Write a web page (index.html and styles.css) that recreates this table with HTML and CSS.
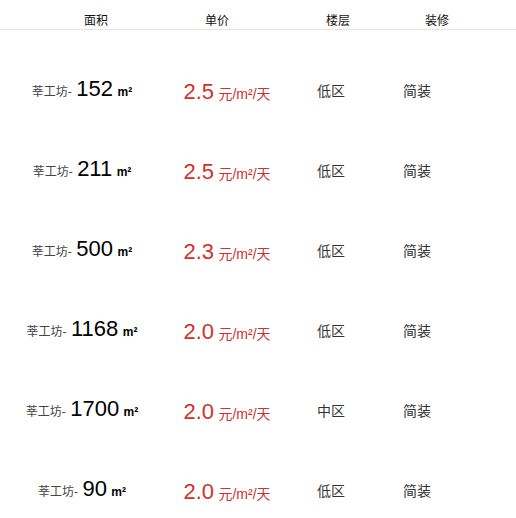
FILE: index.html
```html
<!DOCTYPE html>
<html lang="zh">
<head>
<meta charset="utf-8">
<link rel="stylesheet" href="styles.css">
</head>
<body>
<div class="head">
  <span>面积</span><span>单价</span><span>楼层</span><span>装修</span>
</div>
<div class="list">
  <div class="row">
    <div class="area"><span class="name">莘工坊-</span> <span class="num">152</span> <span class="unit">m²</span></div>
    <div class="price"><span class="pnum">2.5</span> <span class="punit">元/m²/天</span></div>
    <div class="floor">低区</div>
    <div class="deco">简装</div>
  </div>
  <div class="row">
    <div class="area"><span class="name">莘工坊-</span> <span class="num">211</span> <span class="unit">m²</span></div>
    <div class="price"><span class="pnum">2.5</span> <span class="punit">元/m²/天</span></div>
    <div class="floor">低区</div>
    <div class="deco">简装</div>
  </div>
  <div class="row">
    <div class="area"><span class="name">莘工坊-</span> <span class="num">500</span> <span class="unit">m²</span></div>
    <div class="price"><span class="pnum">2.3</span> <span class="punit">元/m²/天</span></div>
    <div class="floor">低区</div>
    <div class="deco">简装</div>
  </div>
  <div class="row">
    <div class="area"><span class="name">莘工坊-</span> <span class="num">1168</span> <span class="unit">m²</span></div>
    <div class="price"><span class="pnum">2.0</span> <span class="punit">元/m²/天</span></div>
    <div class="floor">低区</div>
    <div class="deco">简装</div>
  </div>
  <div class="row">
    <div class="area"><span class="name">莘工坊-</span> <span class="num">1700</span> <span class="unit">m²</span></div>
    <div class="price"><span class="pnum">2.0</span> <span class="punit">元/m²/天</span></div>
    <div class="floor">中区</div>
    <div class="deco">简装</div>
  </div>
  <div class="row">
    <div class="area"><span class="name">莘工坊-</span> <span class="num">90</span> <span class="unit">m²</span></div>
    <div class="price"><span class="pnum">2.0</span> <span class="punit">元/m²/天</span></div>
    <div class="floor">低区</div>
    <div class="deco">简装</div>
  </div>
</div>
</body>
</html>
```
FILE: styles.css
```css
html, body {
  margin: 0;
  padding: 0;
  background: #fff;
}
body {
  font-family: "Liberation Sans", Arial, "Noto Sans CJK SC", sans-serif;
  color: #333;
}
.head {
  display: grid;
  grid-template-columns: 121px 121px 99px auto;
  padding-left: 84px;
  height: 29px;
  border-bottom: 1px solid #e5e5e5;
  font-size: 12px;
  line-height: 12px;
  color: #111;
  align-items: start;
}
.head span {
  padding-top: 15px;
}
.list {
  padding-top: 20px;
}
.row {
  display: grid;
  grid-template-columns: 164px 126px 113px auto;
  height: 80px;
  align-items: center;
}
.area {
  text-align: center;
  white-space: nowrap;
  line-height: 24px;
}
.name {
  font-size: 12px;
  color: #444;
}
.num {
  font-size: 22px;
  color: #000;
}
.unit {
  font-size: 12px;
  color: #000;
  font-weight: 600;
}
.price {
  text-align: center;
  white-space: nowrap;
  color: #d3302b;
  line-height: 24px;
  padding-top: 6px;
}
.pnum {
  font-size: 22px;
}
.punit {
  font-size: 14px;
}
.floor {
  padding-left: 27px;
  font-size: 14px;
  color: #333;
  line-height: 16px;
  padding-top: 2px;
}
.deco {
  font-size: 14px;
  color: #333;
  line-height: 16px;
  padding-top: 2px;
}
```
